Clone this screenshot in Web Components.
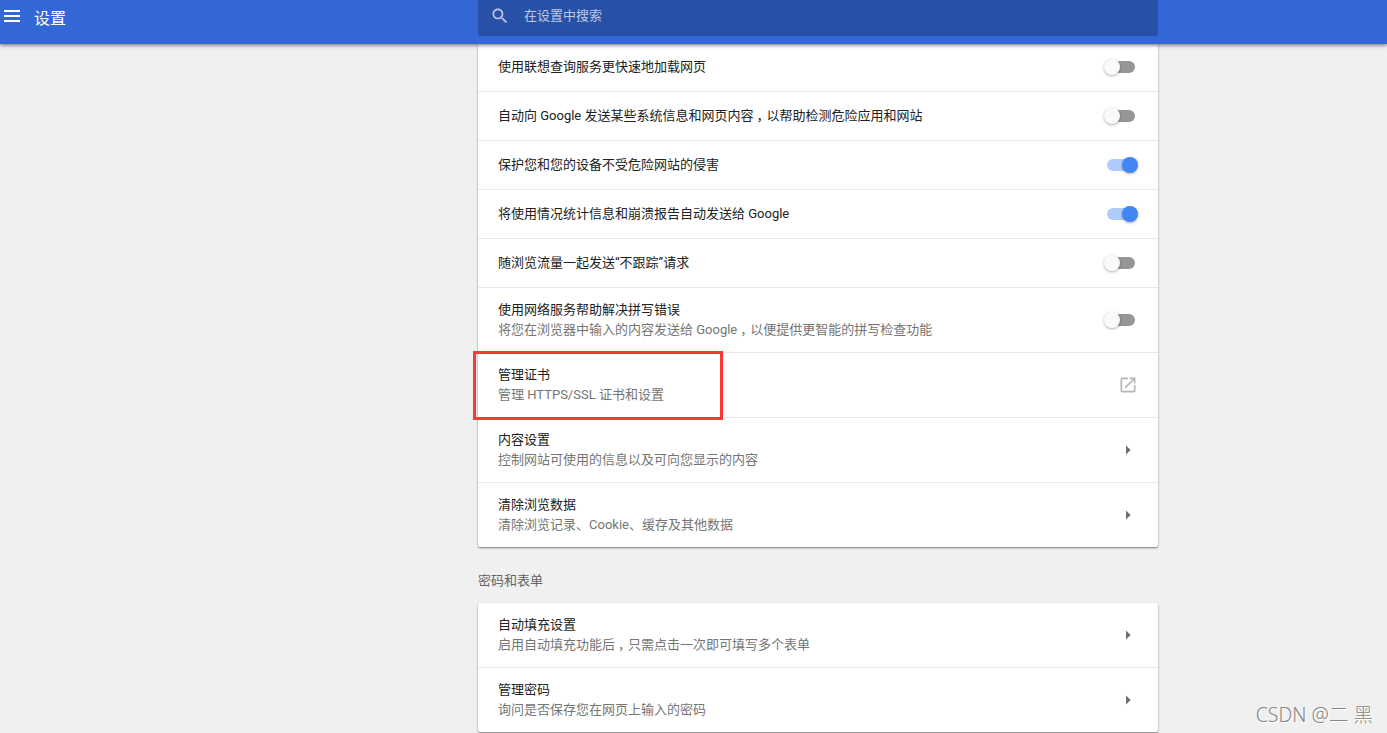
<!DOCTYPE html>
<html lang="zh-CN">
<head>
<meta charset="utf-8">
<title>设置</title>
<style>
    html, body {
        margin: 0;
        height: 100%;
        overflow: hidden;
    }

    body {
        background: #f0f0f0;
        font-family: Roboto, "Noto Sans CJK SC", sans-serif;
        font-size: 13px;
        line-height: 20px;
        color: #212121;
    }

    /* half-width comma, padded back to a full cell */
    .comma {
        padding: 0 3.5px 0 3px;
        font-feature-settings: "halt";
    }
</style>
</head>
<body>
<settings-page>
    <settings-toolbar slot="toolbar" placeholder="在设置中搜索">设置</settings-toolbar>

    <settings-card>
        <settings-row>使用联想查询服务更快速地加载网页<settings-toggle slot="control"></settings-toggle></settings-row>
        <settings-row>自动向 Google 发送某些系统信息和网页内容<span class="comma">，</span>以帮助检测危险应用和网站<settings-toggle slot="control"></settings-toggle></settings-row>
        <settings-row>保护您和您的设备不受危险网站的侵害<settings-toggle slot="control" checked></settings-toggle></settings-row>
        <settings-row>将使用情况统计信息和崩溃报告自动发送给 Google<settings-toggle slot="control" checked></settings-toggle></settings-row>
        <settings-row>随浏览流量一起发送“不跟踪”请求<settings-toggle slot="control"></settings-toggle></settings-row>
        <settings-row two-line>使用网络服务帮助解决拼写错误<span slot="detail">将您在浏览器中输入的内容发送给 Google<span class="comma">，</span>以便提供更智能的拼写检查功能</span><settings-toggle slot="control"></settings-toggle></settings-row>
        <settings-row two-line marked>管理证书<span slot="detail">管理 HTTPS/SSL 证书和设置</span><settings-icon slot="control" name="open"></settings-icon></settings-row>
        <settings-row two-line>内容设置<span slot="detail">控制网站可使用的信息以及可向您显示的内容</span><settings-icon slot="control" name="arrow"></settings-icon></settings-row>
        <settings-row two-line>清除浏览数据<span slot="detail">清除浏览记录、Cookie、缓存及其他数据</span><settings-icon slot="control" name="arrow"></settings-icon></settings-row>
    </settings-card>

    <settings-heading>密码和表单</settings-heading>

    <settings-card>
        <settings-row two-line>自动填充设置<span slot="detail">启用自动填充功能后<span class="comma">，</span>只需点击一次即可填写多个表单</span><settings-icon slot="control" name="arrow"></settings-icon></settings-row>
        <settings-row two-line>管理密码<span slot="detail">询问是否保存您在网页上输入的密码</span><settings-icon slot="control" name="arrow"></settings-icon></settings-row>
    </settings-card>

    <page-watermark slot="watermark">CSDN @二 黑</page-watermark>
</settings-page>

<script>
const ICONS = {
    menu: { size: 24, path: 'M4 6h16v2H4zM4 11h16v2H4zM4 16h16v2H4z' },
    search: { size: 20, path: 'M15.5 14h-.79l-.28-.27C15.41 12.59 16 11.11 16 9.5 16 5.91 13.09 3 9.5 3S3 5.91 3 9.5 5.91 16 9.5 16c1.61 0 3.09-.59 4.23-1.57l.27.28v.79l5 4.99L20.49 19l-4.99-5zm-6 0C7.01 14 5 11.99 5 9.5S7.01 5 9.5 5 14 7.01 14 9.5 11.99 14 9.5 14z' },
    open: { size: 20, path: 'M19 19H5V5h7V3H5c-1.11 0-2 .9-2 2v14c0 1.1.89 2 2 2h14c1.1 0 2-.9 2-2v-7h-2v7zM14 3v2h3.59l-9.83 9.83 1.41 1.41L19 6.41V10h2V3h-7z' },
    arrow: { size: 20, path: 'M9.6 6.5l5.6 5.5-5.6 5.5z' }
};

class SettingsIcon extends HTMLElement {
    constructor() {
        super();
        this.attachShadow({ mode: 'open' });
    }

    connectedCallback() {
        const icon = ICONS[this.getAttribute('name')];

        this.shadowRoot.innerHTML = `
            <style>
                :host { display: block; flex: none; width: ${icon.size}px; height: ${icon.size}px; }
                :host([name="open"]) { color: #b5b5b5; }
                :host([name="arrow"]) { color: #6e6e6e; }
                svg { display: block; width: 100%; height: 100%; fill: currentColor; }
            </style>
            <svg viewBox="0 0 24 24"><path d="${icon.path}"/></svg>
        `;
    }
}

class SettingsToggle extends HTMLElement {
    constructor() {
        super();
        this.attachShadow({ mode: 'open' });
        this.shadowRoot.innerHTML = `
            <style>
                :host {
                    display: grid;
                    align-items: center;
                    width: 34px;
                    height: 16px;
                    cursor: pointer;
                }

                .bar, .knob { grid-area: 1 / 1; }

                .bar {
                    width: 28px;
                    height: 12px;
                    margin-left: 3px;
                    border-radius: 6px;
                    background: #969696;
                }

                .knob {
                    width: 16px;
                    height: 16px;
                    border-radius: 50%;
                    background: #fafafa;
                    box-shadow: 0 1px 3px rgba(0, 0, 0, .32);
                }

                :host([checked]) .bar { background: #b0ccfb; }
                :host([checked]) .knob { background: #4285f4; margin-left: 18px; }
            </style>
            <div class="bar"></div>
            <div class="knob"></div>
        `;
        this.addEventListener('click', () => this.toggleAttribute('checked'));
    }
}

class SettingsRow extends HTMLElement {
    constructor() {
        super();
        this.attachShadow({ mode: 'open' });
        this.shadowRoot.innerHTML = `
            <style>
                :host {
                    display: flex;
                    align-items: center;
                    justify-content: space-between;
                    position: relative;
                    box-sizing: border-box;
                    height: 49px;
                    padding: 0 20px;
                    border-top: 1px solid #e9e9e9;
                }

                :host([two-line]) { height: 65px; }
                :host(:first-of-type) { border-top-color: transparent; }

                .text { margin-top: -1px; }
                .detail { color: #757575; }
                :host(:not([two-line])) .detail { display: none; }

                .mark { display: none; }
                :host([marked]) .mark {
                    display: block;
                    position: absolute;
                    box-sizing: border-box;
                    left: -5px;
                    top: -2px;
                    width: 250px;
                    height: 69px;
                    border: 3px solid #fb3836;
                    z-index: 1;
                }
            </style>
            <div class="text">
                <div><slot></slot></div>
                <div class="detail"><slot name="detail"></slot></div>
            </div>
            <slot name="control"></slot>
            <div class="mark"></div>
        `;
    }
}

class SettingsCard extends HTMLElement {
    constructor() {
        super();
        this.attachShadow({ mode: 'open' });
        this.shadowRoot.innerHTML = `
            <style>
                :host {
                    display: flow-root;
                    background: #fff;
                    border-radius: 2px;
                    box-shadow: 0 1px 2px rgba(0, 0, 0, .5);
                }
                .rows { margin-top: -1px; }
            </style>
            <div class="rows"><slot></slot></div>
        `;
    }
}

class SettingsHeading extends HTMLElement {
    constructor() {
        super();
        this.attachShadow({ mode: 'open' });
        this.shadowRoot.innerHTML = `
            <style>
                :host {
                    display: block;
                    height: 32px;
                    padding-top: 24px;
                    color: #636363;
                }
            </style>
            <slot></slot>
        `;
    }
}

class SettingsToolbar extends HTMLElement {
    constructor() {
        super();
        this.attachShadow({ mode: 'open' });
    }

    connectedCallback() {
        this.shadowRoot.innerHTML = `
            <style>
                :host {
                    display: grid;
                    grid-template-columns: 478px 680px 1fr;
                    position: relative;
                    z-index: 2;
                    height: 44px;
                    background: #3367d6;
                    color: #fff;
                    box-shadow: 0 1px 4px rgba(0, 0, 0, .6);
                }

                .title {
                    display: flex;
                    align-items: center;
                    gap: 10px;
                    height: 32px;
                    font-size: 16px;
                }
                .title div { padding-top: 5px; }

                .search {
                    display: flex;
                    align-items: center;
                    gap: 14px;
                    box-sizing: border-box;
                    height: 36px;
                    padding: 0 12px 5px;
                    border-radius: 0 0 2px 2px;
                    background: #2850a7;
                    color: #bec9e4;
                }
            </style>
            <div class="title">
                <settings-icon name="menu"></settings-icon>
                <div><slot></slot></div>
            </div>
            <div class="search">
                <settings-icon name="search"></settings-icon>
                <div>${this.getAttribute('placeholder')}</div>
            </div>
        `;
    }
}

class PageWatermark extends HTMLElement {
    constructor() {
        super();
        this.attachShadow({ mode: 'open' });
        this.shadowRoot.innerHTML = `
            <style>
                :host {
                    display: block;
                    position: absolute;
                    right: 14px;
                    bottom: 6px;
                    font: 300 19.5px/24px "Noto Sans", "Noto Sans CJK SC", sans-serif;
                    color: #858585;
                    text-shadow: 1px 1px 0 #fff;
                    white-space: nowrap;
                }
            </style>
            <slot></slot>
        `;
    }
}

class SettingsPage extends HTMLElement {
    constructor() {
        super();
        this.attachShadow({ mode: 'open' });
        this.shadowRoot.innerHTML = `
            <style>
                :host {
                    display: block;
                    position: relative;
                    height: 733px;
                    overflow: hidden;
                }

                main {
                    width: 680px;
                    margin: -1px 0 0 478px;
                }
            </style>
            <slot name="toolbar"></slot>
            <main><slot></slot></main>
            <slot name="watermark"></slot>
        `;
    }
}

customElements.define('settings-icon', SettingsIcon);
customElements.define('settings-toggle', SettingsToggle);
customElements.define('settings-row', SettingsRow);
customElements.define('settings-card', SettingsCard);
customElements.define('settings-heading', SettingsHeading);
customElements.define('settings-toolbar', SettingsToolbar);
customElements.define('page-watermark', PageWatermark);
customElements.define('settings-page', SettingsPage);
</script>
</body>
</html>
